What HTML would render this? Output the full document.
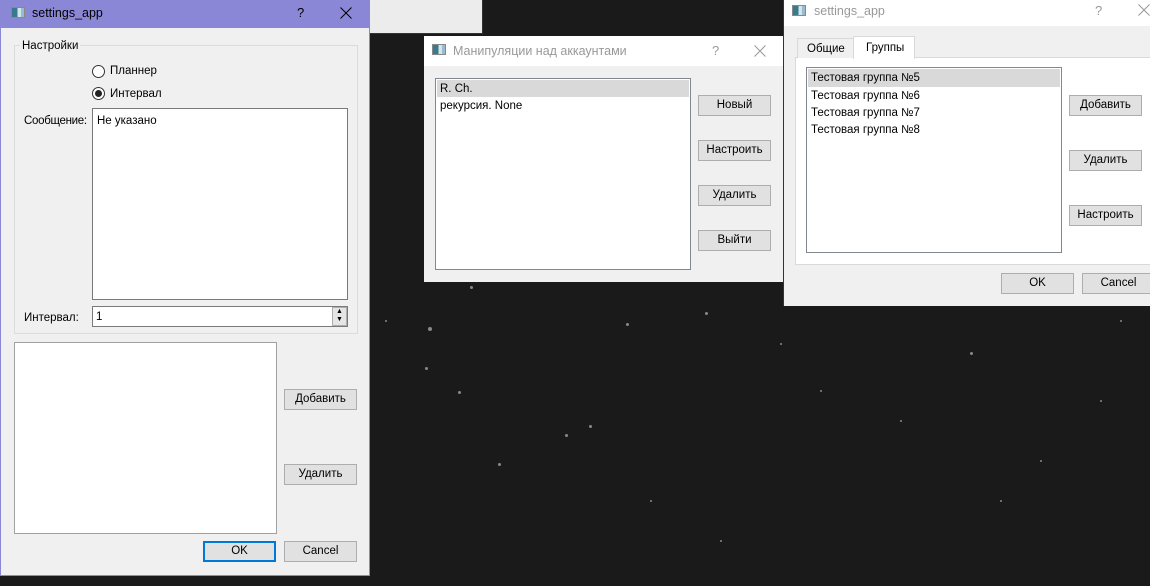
<!DOCTYPE html>
<html><head><meta charset="utf-8"><style>
*{box-sizing:border-box;margin:0;padding:0}
body{width:1150px;height:586px;overflow:hidden;position:relative;background:#1a1a1a;font-family:"Liberation Sans","DejaVu Sans",sans-serif;font-size:11.5px;color:#000}
.a{position:absolute}
.t{position:absolute;white-space:nowrap;line-height:14px}
.btn{position:absolute;background:#e1e1e1;border:1px solid #adadad;text-align:center;line-height:19px;font-size:11.5px}
.lst{position:absolute;background:#fff;border:1px solid #828790}
.ico{position:absolute;width:14px;height:11px;border:1px solid #888;background:linear-gradient(90deg,#3b7a8a 0,#3b7a8a 45%,#cfe6ef 45%,#cfe6ef 75%,#9bc 75%)}
.star{position:absolute;background:#888;border-radius:50%}
svg.x{position:absolute;width:12px;height:12px}
</style></head><body>
<!-- stars -->
<div class="star" style="left:470px;top:286px;width:3px;height:3px"></div>
<div class="star" style="left:428px;top:327px;width:4px;height:4px"></div>
<div class="star" style="left:626px;top:323px;width:3px;height:3px"></div>
<div class="star" style="left:425px;top:367px;width:3px;height:3px"></div>
<div class="star" style="left:458px;top:391px;width:3px;height:3px"></div>
<div class="star" style="left:565px;top:434px;width:3px;height:3px"></div>
<div class="star" style="left:589px;top:425px;width:3px;height:3px"></div>
<div class="star" style="left:705px;top:312px;width:3px;height:3px"></div>
<div class="star" style="left:780px;top:343px;width:2px;height:2px"></div>
<div class="star" style="left:820px;top:390px;width:2px;height:2px"></div>
<div class="star" style="left:900px;top:420px;width:2px;height:2px"></div>
<div class="star" style="left:970px;top:352px;width:3px;height:3px"></div>
<div class="star" style="left:1040px;top:460px;width:2px;height:2px"></div>
<div class="star" style="left:1000px;top:500px;width:2px;height:2px"></div>
<div class="star" style="left:650px;top:500px;width:2px;height:2px"></div>
<div class="star" style="left:720px;top:540px;width:2px;height:2px"></div>
<div class="star" style="left:1100px;top:400px;width:2px;height:2px"></div>
<div class="star" style="left:385px;top:320px;width:2px;height:2px"></div>
<div class="star" style="left:498px;top:463px;width:3px;height:3px"></div>
<div class="star" style="left:676px;top:131px;width:3px;height:3px"></div>
<div class="star" style="left:915px;top:95px;width:3px;height:3px"></div>
<div class="star" style="left:1120px;top:320px;width:2px;height:2px"></div>

<!-- background window -->
<div class="a" style="left:369px;top:0;width:114px;height:34px;background:#ececec;border-bottom:1px solid #333;border-right:1px solid #333"></div>

<!-- Window 1 -->
<div class="a" style="left:0;top:0;width:370px;height:576px;background:#f0f0f0;border:1px solid #8b87d7">
  <div class="a" style="left:0;top:0;width:368px;height:27px;background:#8b87d7"></div>
</div>
<div class="ico" style="left:11px;top:7px"></div>
<div class="t" style="left:32px;top:6px;font-size:12.5px">settings_app</div>
<div class="t" style="left:297px;top:6px;font-size:13px">?</div>
<svg class="x" style="left:340px;top:7px" viewBox="0 0 12 12"><path d="M0.5 0.5L11.5 11.5M11.5 0.5L0.5 11.5" stroke="#000" stroke-width="1"/></svg>

<div class="a" style="left:14px;top:45px;width:344px;height:289px;border:1px solid #dcdcdc"></div>
<div class="t" style="left:20px;top:39px;background:#f0f0f0;padding:0 2px">Настройки</div>
<div class="a" style="left:92px;top:65px;width:13px;height:13px;border:1px solid #333;border-radius:50%;background:#fff"></div>
<div class="t" style="left:110px;top:64px">Планнер</div>
<div class="a" style="left:92px;top:87px;width:13px;height:13px;border:1px solid #333;border-radius:50%;background:#fff"></div>
<div class="a" style="left:95px;top:90px;width:7px;height:7px;border-radius:50%;background:#222"></div>
<div class="t" style="left:110px;top:87px">Интервал</div>
<div class="t" style="left:24px;top:114px;letter-spacing:-0.3px">Сообщение:</div>
<div class="lst" style="left:92px;top:108px;width:256px;height:192px;border-color:#7a7a7a"></div>
<div class="t" style="left:97px;top:114px">Не указано</div>
<div class="t" style="left:24px;top:311px">Интервал:</div>
<div class="lst" style="left:92px;top:306px;width:256px;height:21px;border-color:#7a7a7a"></div>
<div class="t" style="left:96px;top:310px">1</div>
<div class="a" style="left:332px;top:307px;width:15px;height:19px;background:#e5e5e5;border:1px solid #adadad;font-size:7px;line-height:8px;text-align:center">▲<br>▼</div>

<div class="lst" style="left:14px;top:342px;width:263px;height:192px;border-color:#a0a0a0"></div>
<div class="btn" style="left:284px;top:389px;width:73px;height:21px">Добавить</div>
<div class="btn" style="left:284px;top:464px;width:73px;height:21px">Удалить</div>
<div class="btn" style="left:203px;top:541px;width:73px;height:21px;border:2px solid #0078d7;line-height:17px">OK</div>
<div class="btn" style="left:284px;top:541px;width:73px;height:21px">Cancel</div>

<!-- Window 2 -->
<div class="a" style="left:424px;top:36px;width:360px;height:246px;background:#f0f0f0">
  <div class="a" style="left:0;top:0;width:360px;height:30px;background:#fff"></div>
</div>
<div class="ico" style="left:432px;top:44px"></div>
<div class="t" style="left:453px;top:44px;font-size:12.5px;color:#999">Манипуляции над аккаунтами</div>
<div class="t" style="left:712px;top:44px;font-size:13px;color:#999">?</div>
<svg class="x" style="left:754px;top:45px" viewBox="0 0 12 12"><path d="M0.5 0.5L11.5 11.5M11.5 0.5L0.5 11.5" stroke="#999" stroke-width="1"/></svg>
<div class="lst" style="left:435px;top:78px;width:256px;height:192px"></div>
<div class="a" style="left:437px;top:80px;width:252px;height:17px;background:#d9d9d9"></div>
<div class="t" style="left:440px;top:82px">R. Ch.</div>
<div class="t" style="left:440px;top:99px">рекурсия. None</div>
<div class="btn" style="left:698px;top:95px;width:73px;height:21px">Новый</div>
<div class="btn" style="left:698px;top:140px;width:73px;height:21px">Настроить</div>
<div class="btn" style="left:698px;top:185px;width:73px;height:21px">Удалить</div>
<div class="btn" style="left:698px;top:230px;width:73px;height:21px">Выйти</div>

<!-- Window 3 -->
<div class="a" style="left:783px;top:0;width:367px;height:306px;background:#f0f0f0;border-left:1px solid #333">
  <div class="a" style="left:0;top:0;width:367px;height:26px;background:#fff"></div>
</div>
<div class="ico" style="left:792px;top:5px"></div>
<div class="t" style="left:814px;top:4px;font-size:12.5px;color:#999">settings_app</div>
<div class="t" style="left:1095px;top:4px;font-size:13px;color:#999">?</div>
<svg class="x" style="left:1138px;top:4px" viewBox="0 0 12 12"><path d="M0.5 0.5L11.5 11.5M11.5 0.5L0.5 11.5" stroke="#999" stroke-width="1"/></svg>
<div class="a" style="left:795px;top:57px;width:360px;height:208px;background:#fff;border:1px solid #d9d9d9"></div>
<div class="a" style="left:797px;top:38px;width:57px;height:20px;background:#f0f0f0;border:1px solid #d9d9d9;border-bottom:none"></div>
<div class="t" style="left:807px;top:42px">Общие</div>
<div class="a" style="left:853px;top:36px;width:62px;height:23px;background:#fff;border:1px solid #d9d9d9;border-bottom:none"></div>
<div class="t" style="left:866px;top:41px">Группы</div>
<div class="lst" style="left:806px;top:67px;width:256px;height:186px"></div>
<div class="a" style="left:808px;top:69px;width:252px;height:18px;background:#d9d9d9"></div>
<div class="t" style="left:811px;top:71px">Тестовая группа №5</div>
<div class="t" style="left:811px;top:89px">Тестовая группа №6</div>
<div class="t" style="left:811px;top:106px">Тестовая группа №7</div>
<div class="t" style="left:811px;top:123px">Тестовая группа №8</div>
<div class="btn" style="left:1069px;top:95px;width:73px;height:21px">Добавить</div>
<div class="btn" style="left:1069px;top:150px;width:73px;height:21px">Удалить</div>
<div class="btn" style="left:1069px;top:205px;width:73px;height:21px">Настроить</div>
<div class="btn" style="left:1001px;top:273px;width:73px;height:21px">OK</div>
<div class="btn" style="left:1082px;top:273px;width:73px;height:21px">Cancel</div>
</body></html>
